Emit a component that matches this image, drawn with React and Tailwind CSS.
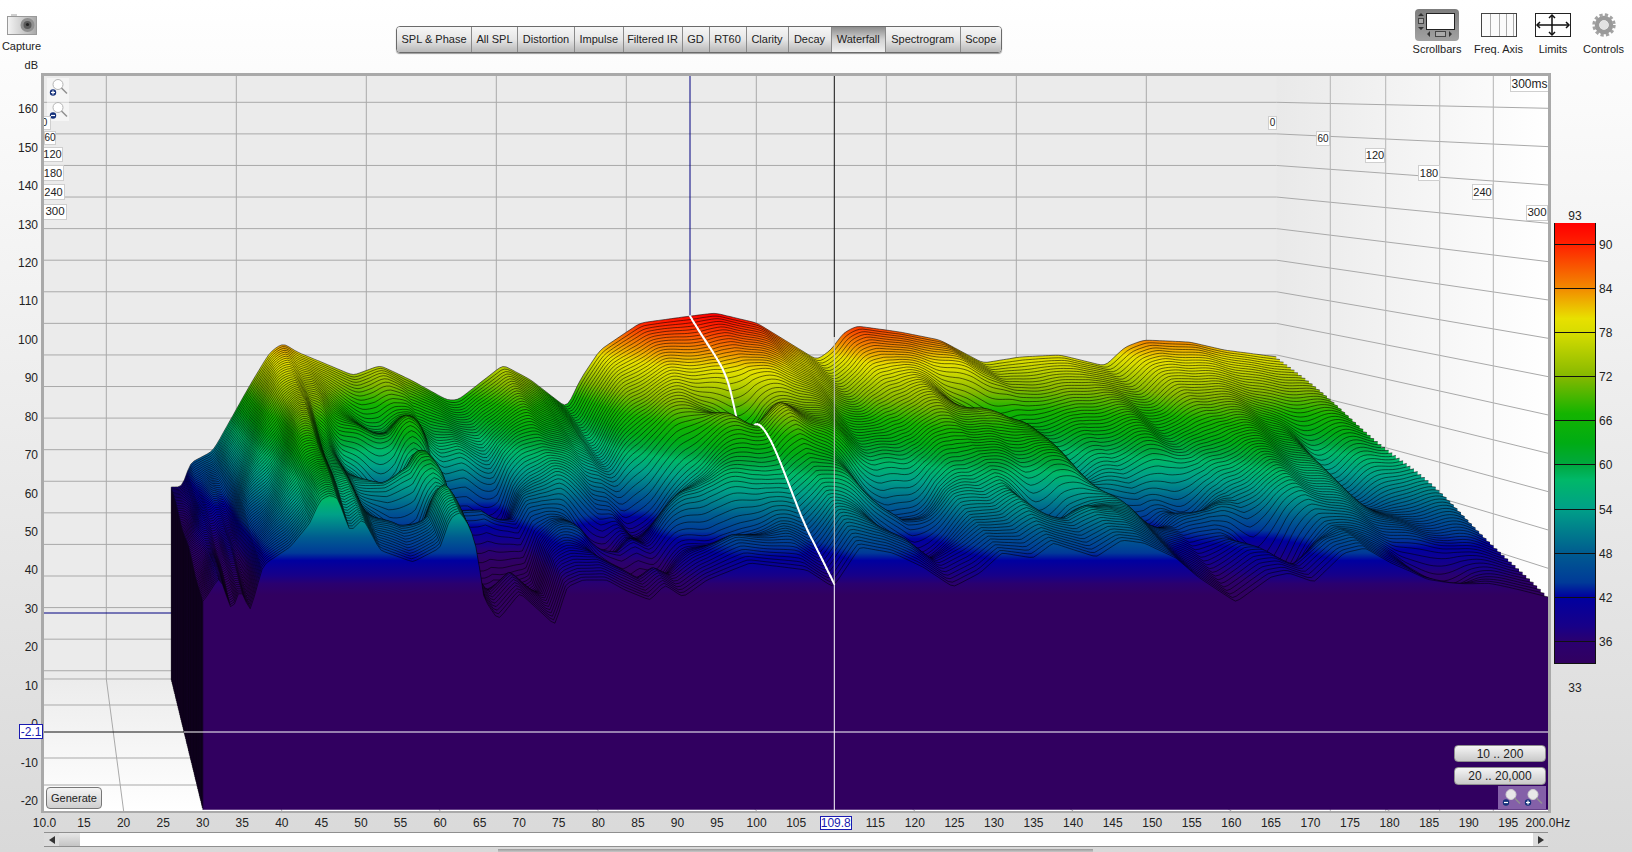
import React from "react";

const Xb = (f) => 106.3 + (f - 20) * 6.5;
const Xf = (f) => 44.5 + (f - 10) * 7.913;
const Yb = (L) => 102.3 + (160 - L) * 3.158;
const Yf = (L) => 108.3 + (160 - L) * 3.833;
const lerp = (a, b, t) => a + (b - a) * t;
const PX = (f, t) => lerp(Xb(f), Xf(f), t);
const PY = (L, t) => lerp(Yb(L), Yf(L), t);

const backPts = [[171,487],[184,487],[188,464],[213,451],[250,385],[270,352],[283,343],[297,352],[353,375],[380,365],[411,380],[447,400],[458,400],[503,365],[531,380],[567,408],[580,380],[600,350],[640,323],[683,317],[715,313],[757,323],[817,360],[832,349],[843,333],[857,326],[900,332],[940,340],[983,363],[1020,357],[1060,355],[1105,366],[1125,347],[1144,340],[1190,342],[1225,350],[1277,357]];
const frontPts = [[203,602],[220,576],[232,613],[240,587],[250,612],[263,565],[290,547],[310,523],[320,500],[330,495],[338,498],[350,532],[363,518],[380,550],[413,562],[440,548],[450,518],[460,512],[470,527],[478,553],[483,597],[498,620],[520,593],[555,625],[567,587],[583,580],[607,580],[625,590],[650,600],[665,585],[683,597],[707,580],[750,563],[807,570],[833,587],[840,577],[860,547],[893,553],[923,567],[953,587],[980,573],[1002,553],[1033,558],[1053,543],[1096,557],[1122,540],[1144,543],[1176,558],[1198,577],[1236,602],[1271,577],[1289,573],[1314,582],[1344,553],[1365,548],[1391,563],[1427,578],[1489,582],[1548,597]];

const STEP = 0.5;
const COUNT = Math.round(170 / STEP) + 1;
function table(pts, toF, toL, radius) {
  const p = pts.map(([x, y]) => [toF(x), toL(y)]);
  const raw = [];
  for (let i = 0; i < COUNT; i++) {
    const f = 30 + i * STEP;
    let j = 0;
    while (j < p.length - 2 && p[j + 1][0] < f) j++;
    const u = Math.max(0, Math.min(1, (f - p[j][0]) / (p[j + 1][0] - p[j][0])));
    raw.push(lerp(p[j][1], p[j + 1][1], u));
  }
  return raw.map((_, i) => {
    let s = 0, w = 0;
    for (let k = -radius; k <= radius; k++) {
      const g = Math.exp(-(k * k) / (radius * radius * 0.5));
      s += raw[Math.max(0, Math.min(COUNT - 1, i + k))] * g;
      w += g;
    }
    return s / w;
  });
}
const S = table(backPts, (x) => (x - 106.3) / 6.5 + 20, (y) => 160 - (y - 102.3) / 3.158, 2);
const F = table(frontPts, (x) => (x - 44.5) / 7.913 + 10, (y) => 160 - (y - 108.3) / 3.833, 1);

// [freq, time, depth, freq width, time width]
const dents = [
  [58,.44,14,5,.08],[70,.45,14,6,.08],[84.5,.64,12,5,.08],[58.5,.71,12,4,.07],[70,.69,10,5,.07],[86.5,.8,10,5,.06],[70,.78,12,4,.07],
  [94.5,.53,12,7,.09],[109.8,.36,10,5,.07],[124,.63,10,7,.08],[99.5,.78,8,6,.07],[123,.79,8,6,.07],[148.5,.26,12,6,.08],
  [154.5,.44,8,4,.1],[157,.62,10,4,.08],[144,.73,10,5,.07],[165.5,.58,10,4,.08],[169.5,.78,9,4,.06],[172.5,.83,9,4,.06],
  [191,.5,10,4,.22],[188.5,.93,6,4,.05],[60,.2,8,5,.1],[52,.55,6,3,.2],
];
function level(f, t) {
  const x = (f - 30) / STEP;
  const i = Math.max(0, Math.min(COUNT - 2, Math.floor(x)));
  const u = x - i;
  const s = lerp(S[i], S[i + 1], u);
  const e = lerp(F[i], F[i + 1], u);
  let L = lerp(s, e, t);
  for (const d of dents) {
    const a = (f - d[0]) / d[3];
    const b = (t - d[1]) / d[4];
    const q = a * a + b * b;
    if (q < 9) L -= d[2] * Math.exp(-q);
  }
  const c = 112 + (t - 0.55) * 38;
  L += 5 * Math.exp(-(((f - c) / 9) ** 2) - (((t - 0.55) / 0.18) ** 2));
  L += 0.9 * Math.sin(f * 0.85 + t * 13) * Math.sin(Math.PI * t);
  return L;
}

const N = 75;
const FLOOR = -23;
const slices = [];
for (let i = 0; i <= N; i++) {
  const t = i / N;
  let line = "";
  for (let k = 0; k < COUNT; k++) {
    const f = 30 + k * STEP;
    line += (k ? "L" : "") + PX(f, t).toFixed(1) + " " + PY(level(f, t), t).toFixed(1);
  }
  const x0 = PX(30, t).toFixed(1);
  const x1 = PX(200, t).toFixed(1);
  const yf = PY(FLOOR, t).toFixed(1);
  const fill = `M${x0} ${yf}L${line}L${x1} ${yf}Z`;
  const stroke = `M${x0} ${yf}L${line}`;
  let cursor = null;
  if (i > 0) {
    const tp = (i - 1) / N;
    cursor = `M${PX(109.8, tp).toFixed(1)} ${PY(level(109.8, tp), tp).toFixed(1)}L${PX(109.8, t).toFixed(1)} ${PY(level(109.8, t), t).toFixed(1)}`;
  }
  slices.push({ i, fill, stroke, cursor, y1: PY(93, t).toFixed(1), y2: PY(33, t).toFixed(1) });
}

const stops = [[93,"#ff0000"],[90,"#ff2200"],[84,"#f28c00"],[80,"#e8e000"],[78,"#d6dc00"],[72,"#84b800"],[67,"#14b400"],[63,"#00ac14"],[60,"#00a840"],[58,"#00b868"],[54,"#00a088"],[48,"#005c90"],[44,"#003a98"],[42,"#0000a0"],[38,"#180088"],[36,"#2a0070"],[33,"#310060"]];

const backH = Array.from({ length: 19 }, (_, k) => 160 - k * 10);
const backV = Array.from({ length: 9 }, (_, k) => 20 + k * 20);
const wallV = [1330.3, 1385.7, 1439.7, 1493.3];

function Surface() {
  return (
    <svg viewBox="44 76 1504 735" width="1504" height="735" className="block">
      <defs>
        <linearGradient id="base" gradientUnits="userSpaceOnUse" x1="0" x2="0" y1="0" y2="1">
          {stops.map(([L, c]) => (
            <stop key={L} offset={(93 - L) / 60} stopColor={c} />
          ))}
        </linearGradient>
        {slices.map((s) => (
          <linearGradient key={s.i} id={`s${s.i}`} href="#base" gradientUnits="userSpaceOnUse" x1="0" x2="0" y1={s.y1} y2={s.y2} />
        ))}
        <linearGradient id="wall" x1="0" x2="1" y1="0" y2="0">
          <stop offset="0" stopColor="#e9e9e9" />
          <stop offset="1" stopColor="#ffffff" />
        </linearGradient>
        <linearGradient id="floor" x1="0" x2="0" y1="0" y2="1">
          <stop offset="0" stopColor="#ececec" />
          <stop offset="1" stopColor="#ffffff" />
        </linearGradient>
      </defs>
      <rect x="44" y="76" width="1233" height="604" fill="#ebebeb" />
      <rect x="1276.6" y="76" width="272" height="735" fill="url(#wall)" />
      <rect x="44" y="679" width="1504" height="132" fill="url(#floor)" />
      <g stroke="#a9a9a9" strokeWidth="1" fill="none">
        {backH.map((L) => (
          <path key={L} d={`M44 ${Yb(L)}H1276.6L1548 ${Yf(L)}`} />
        ))}
        <path d="M44 679H1276.6" />
        {backV.map((f) => (
          <path key={f} d={`M${Xb(f)} 76V679L${Xf(f)} 811`} />
        ))}
        {wallV.map((x) => (
          <path key={x} d={`M${x} 76V811`} stroke="#b5b5b5" />
        ))}
        <path d="M44 705H200M44 758H200M44 785H200" />
      </g>
      <path d="M690 76V316" stroke="#000080" strokeWidth="1" fill="none" />
      <path d="M44 613H172" stroke="#000080" strokeWidth="1" fill="none" />
      {slices.map((s) => (
        <g key={s.i}>
          <path d={s.fill} fill={`url(#s${s.i})`} />
          <path d={s.stroke} fill="none" stroke="#000" strokeWidth="0.65" strokeOpacity="0.85" strokeLinejoin="round" />
          {s.cursor && <path d={s.cursor} fill="none" stroke="#fff" strokeWidth="2" strokeLinecap="round" />}
        </g>
      ))}
      <path d="M834.3 76V337" stroke="#111" strokeWidth="1" />
      <path d="M834.3 337V584" stroke="#c9c9c9" strokeWidth="1" />
      <path d="M834.3 584V811" stroke="#fff" strokeWidth="1" />
      <path d="M44 732H184" stroke="#111" strokeWidth="1" />
      <path d="M184 732H1548" stroke="#fff" strokeWidth="1" />
    </svg>
  );
}

const tabs = [["SPL & Phase",74],["All SPL",46],["Distortion",57],["Impulse",48.5],["Filtered IR",59],["GD",27],["RT60",37],["Clarity",42],["Decay",43],["Waterfall",54.5],["Spectrogram",74.5],["Scope",41.5]];

function Tabs() {
  return (
    <div className="ml-[353px] mt-[26px] flex h-[27px] rounded-[4px] border border-[#6a6a6a] shadow-[0_1px_1px_#999] overflow-hidden">
      {tabs.map(([label, w], i) => (
        <div
          key={label}
          style={{ width: w }}
          className={`flex items-center justify-center text-[11px] text-[#222] ${i ? "border-l border-[#8a8a8a]" : ""} ${
            label === "Waterfall"
              ? "bg-gradient-to-b from-[#8d8d8d] via-[#d2d2d2] to-[#f0f0f0]"
              : "bg-gradient-to-b from-[#f6f6f6] via-[#e6e6e6] to-[#b8b8b8]"
          }`}
        >
          {label}
        </div>
      ))}
    </div>
  );
}

function Camera() {
  return (
    <svg width="30" height="21" viewBox="0 0 30 21">
      <defs>
        <linearGradient id="cam" x1="0" x2="1" y1="0" y2="0">
          <stop offset="0" stopColor="#f4f4f4" />
          <stop offset="1" stopColor="#a8a8a8" />
        </linearGradient>
      </defs>
      <rect x="4" y="0" width="6" height="3" fill="#cfcfcf" />
      <rect x="0.5" y="2.5" width="29" height="18" fill="url(#cam)" stroke="#999" />
      <circle cx="20.5" cy="11" r="7" fill="#8f8f8f" />
      <circle cx="20.5" cy="11" r="4" fill="#5a5a5a" />
      <circle cx="20.5" cy="10.5" r="1.6" fill="#222" />
    </svg>
  );
}

function ScrollIcon() {
  return (
    <svg width="44" height="32" viewBox="0 0 44 32">
      <defs>
        <linearGradient id="sel" x1="0" x2="0" y1="0" y2="1">
          <stop offset="0" stopColor="#7d7d7d" />
          <stop offset="1" stopColor="#a2a2a2" />
        </linearGradient>
      </defs>
      <rect x="0" y="0" width="44" height="32" rx="4" fill="url(#sel)" />
      <rect x="11.5" y="4.5" width="28" height="16" fill="#fff" stroke="#222" />
      <path d="M6 4l3 3H3zM6 21l3-3H3z" fill="#333" />
      <rect x="3.5" y="9.5" width="5" height="5" fill="#aaa" stroke="#444" />
      <path d="M12 25l3-3v6zM37 25l-3-3v6z" fill="#333" />
      <rect x="20.5" y="22.5" width="10" height="5" fill="#aaa" stroke="#444" />
    </svg>
  );
}

function FreqIcon() {
  return (
    <svg width="36" height="24" viewBox="0 0 36 24">
      <rect x="0.5" y="0.5" width="35" height="23" fill="#fbfbfb" stroke="#444" />
      <path d="M9.5 1V23M18.5 1V23M25.5 1V23M32.5 1V23" stroke="#aaa" />
    </svg>
  );
}

function LimitsIcon() {
  return (
    <svg width="36" height="24" viewBox="0 0 36 24">
      <rect x="0.5" y="0.5" width="35" height="23" fill="#fff" stroke="#222" />
      <path d="M2 12H34M17 2V22" stroke="#111" strokeWidth="1.5" />
      <path d="M5 9L2 12L5 15M31 9L34 12L31 15M14 5L17 2L20 5M14 19L17 22L20 19" fill="none" stroke="#111" strokeWidth="1.5" />
    </svg>
  );
}

function GearIcon() {
  return (
    <svg width="24" height="24" viewBox="0 0 24 24">
      <circle cx="12" cy="12" r="10.2" fill="none" stroke="#a3a3a3" strokeWidth="3" strokeDasharray="3.2 2.2" />
      <circle cx="12" cy="12" r="7" fill="none" stroke="#9a9a9a" strokeWidth="4.5" />
      <circle cx="12" cy="12" r="4.5" fill="#e2e2e2" />
    </svg>
  );
}

function Tool({ w, label, children }) {
  return (
    <div style={{ width: w }} className="flex flex-col items-center">
      <div className="flex h-[42px] items-center justify-center pt-[8px]">{children}</div>
      <div className="h-[14px] text-[11px] leading-[14px] whitespace-nowrap text-[#222]">{label}</div>
    </div>
  );
}

function Magnifier({ plus, light }) {
  return (
    <svg width="20" height="20" viewBox="0 0 20 20">
      <circle cx="10" cy="6.5" r="5" fill={light ? "#e8e8e8" : "#fff"} stroke={light ? "#d0d0d0" : "#b5b5b5"} />
      <path d="M13.5 10L19 15.5" stroke="#909090" strokeWidth="1.5" />
      <circle cx="5" cy="14.5" r="3.2" fill="#14307a" />
      <path d="M3 14.5H7" stroke="#fff" strokeWidth="1.2" />
      {plus && <path d="M5 12.5V16.5" stroke="#fff" strokeWidth="1.2" />}
    </svg>
  );
}

const yLabels = Array.from({ length: 19 }, (_, k) => 160 - k * 10);
const xLabels = Array.from({ length: 39 }, (_, k) => 10 + k * 5);
const tags = [
  ["0", -6, 40, 13, 14, 10], ["60", 0, 55, 12, 14, 10], ["120", -2, 71, 21, 15, 11], ["180", -2, 89, 22, 16, 11], ["240", -2, 108, 23, 16, 11], ["300", -1, 128, 24, 16, 11.5],
  ["0", 1224, 40, 9, 14, 10], ["60", 1272, 55, 14, 15, 10], ["120", 1321, 72, 20, 15, 11], ["180", 1374, 89, 22, 16, 11], ["240", 1428, 108, 21, 16, 11], ["300", 1482, 129, 22, 16, 11.5],
];

const barTicks = [90, 84, 78, 72, 66, 60, 54, 48, 42, 36];

function Arrow({ right }) {
  return (
    <svg width="6" height="8" viewBox="0 0 6 8">
      <path d={right ? "M0 0L6 4L0 8Z" : "M6 0L0 4L6 8Z"} fill="#333" />
    </svg>
  );
}

export default function App() {
  return (
    <div className="flex h-[852px] w-[1632px] flex-col overflow-hidden bg-gradient-to-b from-[#ffffff] to-[#d9d9d9] font-['Liberation_Sans',Arial,sans-serif] text-[#222]">
      <div className="flex h-[56px] shrink-0">
        <div className="flex w-[43px] flex-col items-center pt-[14px]">
          <Camera />
          <div className="mt-[4px] h-[14px] text-[11px] leading-[14px]">Capture</div>
        </div>
        <Tabs />
        <div className="ml-auto flex">
          <Tool w={58} label="Scrollbars"><ScrollIcon /></Tool>
          <Tool w={65} label="Freq. Axis"><FreqIcon /></Tool>
          <Tool w={44} label="Limits"><LimitsIcon /></Tool>
          <Tool w={57} label="Controls"><GearIcon /></Tool>
        </div>
      </div>

      <div className="flex h-[758px] shrink-0">
        <div className="relative w-[41px] shrink-0 text-[11px]">
          <div className="flex h-[18px] items-center justify-end pr-[3px]">dB</div>
          <div className="flex flex-col pt-[16px]">
            {yLabels.map((v) => (
              <div key={v} className="flex h-[38.44px] items-center justify-end pr-[3px] text-[12px]">{v}</div>
            ))}
          </div>
          <div className="absolute left-[19px] top-[668px] flex h-[15px] w-[24px] items-center justify-center border border-[#1a1ab0] bg-white text-[12px] text-[#1a1ab0]">-2.1</div>
        </div>

        <div className="mt-[17px] h-[740px] w-[1510px] shrink-0 border-x-[3px] border-b-2 border-t-[3px] border-x-[#a9a9a9] border-b-[#a9a9a9] border-t-[#a9a9a9]">
          <div className="relative h-[735px] w-[1504px] overflow-hidden">
            <Surface />
            <div className="absolute left-[3px] top-[2px] flex flex-col gap-[3px] bg-white/50 px-[1px]">
              <Magnifier plus />
              <Magnifier />
            </div>
            {tags.map(([t, l, tp, w, h, fs], i) => (
              <div
                key={i}
                style={{ left: l, top: tp, width: w, height: h, fontSize: fs }}
                className="absolute flex items-center justify-center border border-[#cfcfcf] bg-white leading-none"
              >
                {t}
              </div>
            ))}
            <div className="absolute right-0 top-0 flex h-[16px] w-[38px] items-center justify-center border-b border-l border-[#cfcfcf] bg-white text-[12px]">300ms</div>
            <button className="absolute left-[2px] bottom-[2px] h-[22px] w-[56px] rounded-[4px] border border-[#777] bg-gradient-to-b from-[#f4f4f4] to-[#cfcfcf] text-[11px] text-[#222]">Generate</button>
            <button className="absolute right-[2px] bottom-[49px] h-[17px] w-[92px] rounded-[4px] border border-[#8e8e8e] bg-gradient-to-b from-[#f5f5f5] to-[#c9c9c9] text-[12px] leading-none text-[#222]">10 .. 200</button>
            <button className="absolute right-[2px] bottom-[26px] h-[18px] w-[92px] rounded-[4px] border border-[#8e8e8e] bg-gradient-to-b from-[#f5f5f5] to-[#c9c9c9] text-[12px] leading-none text-[#222]">20 .. 20,000</button>
            <div className="absolute right-[2px] bottom-[2px] flex h-[23px] w-[48px] items-center justify-between bg-[#8460a8] px-[3px]">
              <Magnifier light />
              <Magnifier plus light />
            </div>
          </div>
        </div>

        <div className="ml-[3px] flex flex-col">
          <div className="mt-[153px] h-[14px] w-[42px] text-center text-[12px] leading-[14px]">93</div>
          <div className="flex">
            <div className="flex h-[441px] w-[42px] flex-col border-x border-b border-[#111] bg-[linear-gradient(to_bottom,#ff0000_0%,#ff2200_5%,#f28c00_15%,#e8e000_21.7%,#d6dc00_25%,#84b800_35%,#14b400_43.3%,#00ac14_50%,#00a840_55%,#00b868_58.3%,#00a088_65%,#005c90_75%,#003a98_81.7%,#0000a0_85%,#180088_91.7%,#2a0070_95%,#310060_100%)]">
              <div className="h-[22px] shrink-0 border-b border-[#111]" />
              {barTicks.slice(1).map((v) => (
                <div key={v} className="h-[44.1px] shrink-0 border-b border-[#111]" />
              ))}
            </div>
            <div className="ml-[3px] flex flex-col pt-[15px] text-[12px]">
              {barTicks.map((v) => (
                <div key={v} className="h-[44.1px] leading-[14px]">{v}</div>
              ))}
            </div>
          </div>
          <div className="h-[16px] w-[42px] text-center text-[12px] leading-[18px]">33</div>
        </div>
      </div>

      <div className="flex h-[18px] shrink-0 pl-[24.7px] text-[12px]">
        {xLabels.map((v) => {
          const text = v === 10 ? "10.0" : v === 200 ? "200.0Hz" : String(v);
          return v === 110 ? (
            <div key={v} className="flex h-[18px] w-[39.565px] items-start justify-center pt-[2px]">
              <div className="flex h-[14px] w-[32px] shrink-0 items-center justify-center border border-[#1a1ab0] bg-white text-[#1a1ab0]">109.8</div>
            </div>
          ) : (
            <div key={v} className="flex h-[18px] w-[39.565px] items-center justify-center whitespace-nowrap">{text}</div>
          );
        })}
      </div>

      <div className="ml-[44px] flex h-[15px] w-[1504px] shrink-0 border-y border-[#8f8f8f] bg-white">
        <div className="flex w-[15px] items-center justify-center bg-[#dcdcdc]"><Arrow /></div>
        <div className="w-[21px] bg-gradient-to-b from-[#e8e8e8] to-[#c4c4c4]" />
        <div className="flex-1" />
        <div className="flex w-[15px] items-center justify-center bg-[#dcdcdc]"><Arrow right /></div>
      </div>

      <div className="flex h-[5px] shrink-0 items-end pl-[498px]">
        <div className="h-[3px] w-[595px] bg-gradient-to-b from-[#9a9a9a] to-[#c8c8c8]" />
      </div>
    </div>
  );
}
